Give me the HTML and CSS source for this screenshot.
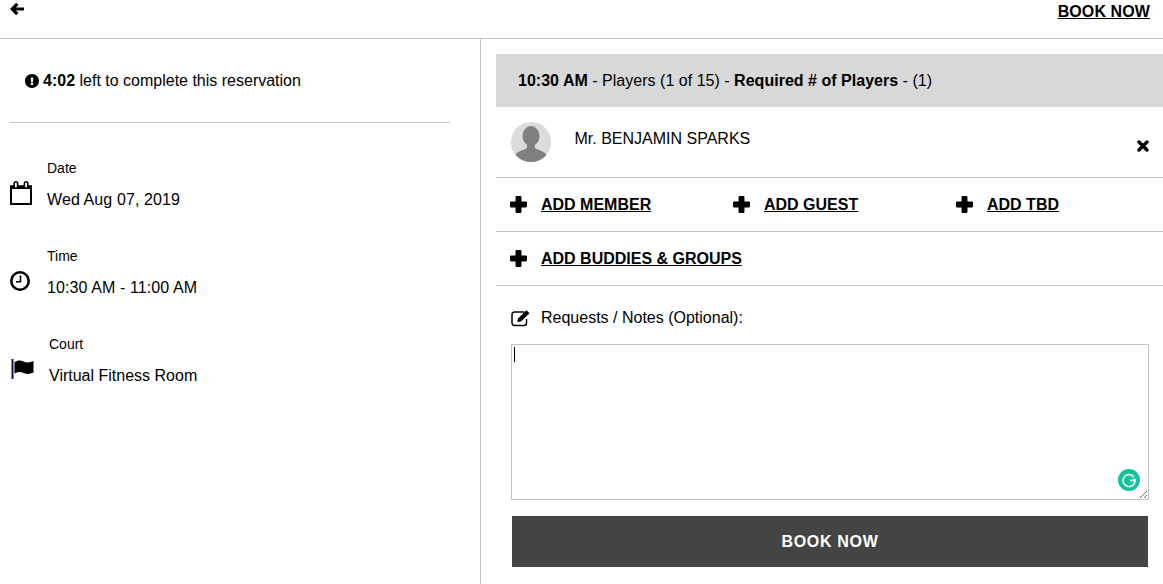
FILE: index.html
```html
<!DOCTYPE html>
<html lang="en">
<head>
<meta charset="utf-8">
<title>Book reservation</title>
<link rel="stylesheet" href="styles.css">
</head>
<body>
<svg class="defs" aria-hidden="true"><symbol id="plus" viewBox="0 0 16 16"><path d="M6.300 0h3.400q1.100 0 1.100 1.100v4.100h4.100q1.100 0 1.100 1.100v3.400q0 1.100-1.100 1.100h-4.100v4.100q0 1.100-1.100 1.100H6.300q-1.100 0-1.100-1.100v-4.100H1.100Q0 10.800 0 9.700V6.300q0-1.100 1.100-1.100h4.100V1.100Q5.200 0 6.300 0z"/></symbol></svg>
<header class="topbar">
  <a class="back" href="#" aria-label="Back"><svg class="icon-back" viewBox="0 0 14 14"><path d="M7.300 1.800 2.300 7l5 5.200M3 7h11" fill="none" stroke="#000" stroke-width="3.200"/></svg></a>
  <a class="top-book" href="#">BOOK NOW</a>
</header>
<main class="layout">
  <aside class="left">
    <div class="timer">
      <svg class="icon-alert" viewBox="8 8 496 496"><path d="M504 256c0 136.997-111.043 248-248 248S8 392.997 8 256C8 119.083 119.043 8 256 8s248 111.083 248 248zm-248 50c-25.405 0-46 20.595-46 46s20.595 46 46 46 46-20.595 46-46-20.595-46-46-46zm-43.673-165.346l7.418 136c.347 6.364 5.609 11.346 11.982 11.346h48.546c6.373 0 11.635-4.982 11.982-11.346l7.418-136c.375-6.874-5.098-12.654-11.982-12.654h-63.383c-6.884 0-12.356 5.780-11.981 12.654z"/></svg>
      <span><b>4:02</b> left to complete this reservation</span>
    </div>
    <div class="info">
      <svg class="info-icon" viewBox="0 0 24 24"><path d="M1 5.500h20v17.500H1z" fill="none" stroke="#000" stroke-width="2"/><path d="M0 4.500h22V8H0z"/><rect x="4.200" y=".8" width="3.400" height="6.500" rx="1.700" fill="#fff" stroke="#000" stroke-width="1.600"/><rect x="14.400" y=".8" width="3.400" height="6.500" rx="1.700" fill="#fff" stroke="#000" stroke-width="1.600"/></svg>
      <div class="info-text"><div class="info-label">Date</div><div class="info-value value-spaced">Wed Aug 07, 2019</div></div>
    </div>
    <div class="info">
      <svg class="info-icon icon-clock" viewBox="0 0 20 20"><circle cx="10" cy="10" r="8.700" fill="none" stroke="#000" stroke-width="2.600"/><path d="M10.500 4.500v6.200H6" fill="none" stroke="#000" stroke-width="1.600"/></svg>
      <div class="info-text"><div class="info-label">Time</div><div class="info-value value-spaced">10:30 AM - 11:00 AM</div></div>
    </div>
    <div class="info info-court">
      <svg class="info-icon" viewBox="0 0 24 24"><path d="M1.500 2h2v20h-2z" fill="#14104a"/><path d="M4.500 5c3-2 6-2 9-.6s6 1.400 10-.4v11.500c-4 1.800-7 1.800-10 .4s-6-1.400-9 .6z"/></svg>
      <div class="info-text"><div class="info-label">Court</div><div class="info-value">Virtual Fitness Room</div></div>
    </div>
  </aside>
  <section class="right">
    <div class="band"><b>10:30 AM</b> - Players (1 of 15) - <b>Required # of Players</b> - (1)</div>
    <div class="player">
      <svg class="avatar" viewBox="0 0 40 40"><circle cx="20" cy="20" r="20" fill="#dcdcdc"/><clipPath id="avatar-clip"><circle cx="20" cy="20" r="20"/></clipPath><g clip-path="url(#avatar-clip)" fill="#7f7f7f"><ellipse cx="20" cy="14" rx="8.500" ry="10"/><path d="M16 21h8v5c2 2 11 3 12 8v6H4v-6c1-5 10-6 12-8z"/></g></svg>
      <span class="player-name">Mr. BENJAMIN SPARKS</span>
      <svg class="icon-remove" viewBox="0 0 12 12"><path d="M2 2l8 8M10 2l-8 8" fill="none" stroke="#000" stroke-width="3.400" stroke-linecap="round"/></svg>
    </div>
    <div class="add-row">
      <a class="add" href="#"><svg class="icon-plus"><use href="#plus"/></svg><span>ADD MEMBER</span></a>
      <a class="add" href="#"><svg class="icon-plus"><use href="#plus"/></svg><span>ADD GUEST</span></a>
      <a class="add" href="#"><svg class="icon-plus"><use href="#plus"/></svg><span>ADD TBD</span></a>
    </div>
    <div class="add-row">
      <a class="add add-wide" href="#"><svg class="icon-plus"><use href="#plus"/></svg><span>ADD BUDDIES &amp; GROUPS</span></a>
    </div>
    <label class="notes-label" for="notes">
      <svg class="icon-edit" viewBox="0 0 20 18"><path d="M13.500 3H3.500A2.500 2.500 0 0 0 1 5.500V14a2.500 2.500 0 0 0 2.500 2.500H13A2.500 2.500 0 0 0 15.500 14V10" fill="none" stroke="#000" stroke-width="1.500"/><path d="M7 9.500 15.500 1.200l3 3L10 12.500l-3.600.6z"/></svg>
      <span>Requests / Notes (Optional):</span>
    </label>
    <div class="notes-box">
      <textarea id="notes" class="notes"></textarea>
      <span class="caret"></span>
      <svg class="grammarly" viewBox="0 0 22 22"><circle cx="11" cy="11" r="11" fill="#15c39a"/><path d="M15.800 8A6 6 0 1 0 17 11.500h-5" fill="none" stroke="#fff" stroke-width="1.500"/><path d="M14.200 9.700h3.500V13z" fill="#fff"/></svg>
    </div>
    <button class="submit" type="button">BOOK NOW</button>
  </section>
</main>
</body>
</html>
```
FILE: styles.css
```css
* { box-sizing: border-box; }
html, body { margin: 0; height: 100%; overflow: hidden; }
body { font-family: "Liberation Sans", Arial, sans-serif; font-size: 16px; color: #000; background: #fff; }
a { color: #000; }
svg { display: block; flex: none; }
.defs { display: none; }

.topbar { height: 39px; border-bottom: 1px solid #c4c4c4; display: flex; justify-content: space-between; padding: 2px 13px 0 10px; }
.icon-back { width: 14px; height: 14px; }
.top-book { font-weight: 700; line-height: 18px; margin-top: 1px; letter-spacing: .1px; }

.layout { display: flex; height: 545px; }
.left { width: 481px; border-right: 1px solid #c4c4c4; padding: 0 30px 0 10px; }
.timer { height: 84px; border-bottom: 1px solid #c4c4c4; width: 440px; display: flex; align-items: center; gap: 4px; padding-left: 15px; }
.icon-alert { width: 14px; height: 14px; }

.info { display: flex; margin-top: 37px; height: 51px; align-items: flex-start; gap: 13px; }
.info-icon { width: 24px; height: 24px; margin-top: 21px; }
.icon-clock { width: 20px; height: 20px; margin-right: 4px; margin-top: 23px; }
.info-label { font-size: 14px; line-height: 16px; }
.info-value { line-height: 18px; margin-top: 15px; }
.value-spaced { letter-spacing: .1px; }
.info-court { gap: 15px; }

.right { flex: 1; padding-top: 15px; padding-left: 15px; min-width: 0; }
.band { height: 53px; background: #d8d8d8; display: flex; align-items: center; padding-left: 22px; white-space: pre; letter-spacing: .02px; }
.player { height: 71px; border-bottom: 1px solid #c4c4c4; display: flex; align-items: flex-start; padding: 15px 14px 0 15px; }
.avatar { width: 40px; height: 40px; }
.player-name { margin-left: 23.5px; margin-top: 8px; line-height: 18px; flex: 1; }
.icon-remove { width: 12px; height: 12px; margin-top: 18px; }
.add-row { height: 54px; border-bottom: 1px solid #c4c4c4; display: flex; align-items: center; padding-left: 14px; }
.add { flex: none; width: 223px; display: flex; align-items: center; gap: 14px; font-weight: 700; }
.add-wide { width: auto; }
.icon-plus { width: 17px; height: 17px; }
.notes-label { display: flex; align-items: center; height: 18px; margin: 23px 0 0 15px; gap: 10px; }
.icon-edit { width: 20px; height: 18px; }
.notes-box { position: relative; margin: 17px 14px 0 15px; height: 156px; }
.notes { display: block; width: 100%; height: 100%; border: 1px solid #c4c4c4; border-radius: 0; outline: none; padding: 2px; font: 16px "Liberation Sans", Arial, sans-serif; }
.caret { position: absolute; left: 3px; top: 3px; width: 1px; height: 15px; background: #000; }
.grammarly { position: absolute; right: 9px; bottom: 9px; width: 22px; height: 22px; }
.submit { display: block; width: 636px; height: 51px; margin: 16px 0 0 16px; border: 0; background: #444; color: #fff; font: 700 16px "Liberation Sans", Arial, sans-serif; letter-spacing: .7px; }
```
